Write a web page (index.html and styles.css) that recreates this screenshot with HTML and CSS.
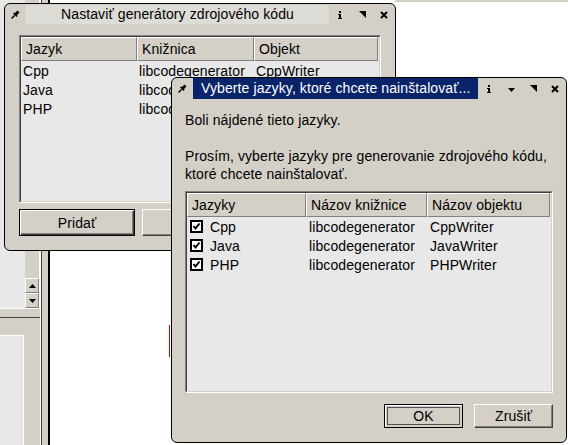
FILE: index.html
```html
<!DOCTYPE html>
<html>
<head>
<meta charset="utf-8">
<link rel="stylesheet" href="styles.css">
</head>
<body>
<div class="desk">
  <div class="topline"></div>
  <div class="bgapp">
    <div class="bg-main">
      <div class="bg-upper">
        <div class="bg-list"></div>
        <div class="bg-scroll">
          <div class="sb-btn"><svg width="7" height="4" viewBox="0 0 7 4"><path d="M0 4 L3.5 0 L7 4 Z" fill="#000"/></svg></div>
          <div class="sb-btn"><svg width="7" height="4" viewBox="0 0 7 4"><path d="M0 0 L7 0 L3.5 4 Z" fill="#000"/></svg></div>
        </div>
      </div>
      <div class="bg-hbar"></div>
      <div class="bg-band"></div>
      <div class="bg-lower"><div class="bg-panel"></div></div>
    </div>
    <div class="bg-edge"></div>
  </div>
  <div class="redmark"></div>

  <div class="win w1">
    <div class="titlebar">
      <div class="pin"><svg width="9" height="9" viewBox="0 0 9 9"><path d="M0.5 8.5 L3.5 5.5" stroke="#000" stroke-width="1.5"/><path d="M2 3.5 L5.5 7 L6.5 6 L6 5 L8.5 2.5 L6.5 0.5 L4 3 L3 2.5 Z" fill="#000"/></svg></div>
      <div class="title">Nastaviť generátory zdrojového kódu</div>
      <div class="tbtns">
        <div class="tbtn"><svg width="4" height="8" viewBox="0 0 4 8"><rect x="1" y="0" width="2" height="2" fill="#000"/><rect x="0" y="3" width="3" height="1" fill="#000"/><rect x="1" y="3" width="2" height="5" fill="#000"/><rect x="0" y="7" width="4" height="1" fill="#000"/></svg></div>
        <div class="tbtn"><svg width="7" height="7" viewBox="0 0 7 7"><path d="M0 0 L7 0 L7 7 Z" fill="#000"/></svg></div>
        <div class="tbtn"><svg width="8" height="8" viewBox="0 0 8 8"><path d="M1 1 L7 7 M7 1 L1 7" stroke="#000" stroke-width="2"/></svg></div>
      </div>
    </div>
    <div class="body1">
      <div class="frame f1">
        <div class="frame-in">
          <div class="lrow lhead">
            <div class="hc">Jazyk</div>
            <div class="hc">Knižnica</div>
            <div class="hc">Objekt</div>
          </div>
          <div class="lrow">
            <div class="c">Cpp</div>
            <div class="c">libcodegenerator</div>
            <div class="c">CppWriter</div>
          </div>
          <div class="lrow">
            <div class="c">Java</div>
            <div class="c">libcodegenerator</div>
            <div class="c">JavaWriter</div>
          </div>
          <div class="lrow">
            <div class="c">PHP</div>
            <div class="c">libcodegenerator</div>
            <div class="c">PHPWriter</div>
          </div>
        </div>
      </div>
      <div class="btnrow1">
        <button class="btn btn1 default">Pridať</button>
        <button class="btn btn1"></button>
        <button class="btn btn1"></button>
      </div>
    </div>
  </div>

  <div class="win w2">
    <div class="titlebar">
      <div class="pin"><svg width="9" height="9" viewBox="0 0 9 9"><path d="M0.5 8.5 L3.5 5.5" stroke="#000" stroke-width="1.5"/><path d="M2 3.5 L5.5 7 L6.5 6 L6 5 L8.5 2.5 L6.5 0.5 L4 3 L3 2.5 Z" fill="#000"/></svg></div>
      <div class="title active">Vyberte jazyky, ktoré chcete nainštalovať...</div>
      <div class="tbtns">
        <div class="tbtn"><svg width="4" height="8" viewBox="0 0 4 8"><rect x="1" y="0" width="2" height="2" fill="#000"/><rect x="0" y="3" width="3" height="1" fill="#000"/><rect x="1" y="3" width="2" height="5" fill="#000"/><rect x="0" y="7" width="4" height="1" fill="#000"/></svg></div>
        <div class="tbtn"><svg class="down" width="7" height="4" viewBox="0 0 7 4"><path d="M0 0 L7 0 L3.5 4 Z" fill="#000"/></svg></div>
        <div class="tbtn"><svg width="7" height="7" viewBox="0 0 7 7"><path d="M0 0 L7 0 L7 7 Z" fill="#000"/></svg></div>
        <div class="tbtn"><svg width="8" height="8" viewBox="0 0 8 8"><path d="M1 1 L7 7 M7 1 L1 7" stroke="#000" stroke-width="2"/></svg></div>
      </div>
    </div>
    <div class="body2">
      <div class="msg">
        <p>Boli nájdené tieto jazyky.</p>
        <p class="gap">Prosím, vyberte jazyky pre generovanie zdrojového kódu,<br>ktoré chcete nainštalovať.</p>
      </div>
      <div class="frame f2">
        <div class="frame-in">
          <div class="lrow lhead">
            <div class="hc">Jazyky</div>
            <div class="hc">Názov knižnice</div>
            <div class="hc">Názov objektu</div>
          </div>
          <div class="lrow">
            <div class="c"><span class="cb"><svg width="13" height="13" viewBox="0 0 13 13"><rect x="1" y="1" width="11" height="11" fill="#fff" stroke="#000" stroke-width="2"/><path d="M3.5 6 L5.5 8.5 L9.5 3.5" fill="none" stroke="#000" stroke-width="2"/></svg></span>Cpp</div>
            <div class="c">libcodegenerator</div>
            <div class="c">CppWriter</div>
          </div>
          <div class="lrow">
            <div class="c"><span class="cb"><svg width="13" height="13" viewBox="0 0 13 13"><rect x="1" y="1" width="11" height="11" fill="#fff" stroke="#000" stroke-width="2"/><path d="M3.5 6 L5.5 8.5 L9.5 3.5" fill="none" stroke="#000" stroke-width="2"/></svg></span>Java</div>
            <div class="c">libcodegenerator</div>
            <div class="c">JavaWriter</div>
          </div>
          <div class="lrow">
            <div class="c"><span class="cb"><svg width="13" height="13" viewBox="0 0 13 13"><rect x="1" y="1" width="11" height="11" fill="#fff" stroke="#000" stroke-width="2"/><path d="M3.5 6 L5.5 8.5 L9.5 3.5" fill="none" stroke="#000" stroke-width="2"/></svg></span>PHP</div>
            <div class="c">libcodegenerator</div>
            <div class="c">PHPWriter</div>
          </div>
        </div>
      </div>
      <div class="btnrow2">
        <button class="btn btn2 default focus">OK</button>
        <button class="btn btn2">Zrušiť</button>
      </div>
    </div>
  </div>
</div>
</body>
</html>
```

FILE: styles.css
```css
html, body {
  margin: 0;
  padding: 0;
}
body {
  font-family: "Liberation Sans", Arial, sans-serif;
  font-size: 14px;
  letter-spacing: 0.1px;
  color: #000;
  background: #fff;
}
.desk {
  position: relative;
  width: 568px;
  height: 445px;
  overflow: hidden;
  background: #fff;
}
.topline {
  position: absolute;
  left: 395px;
  top: 0;
  right: 0;
  height: 2px;
  background: #d4d0c8;
}

/* background application on the left */
.bgapp {
  position: absolute;
  left: 0;
  top: 0;
  width: 50px;
  height: 445px;
  display: flex;
}
.bg-main {
  width: 40px;
  display: flex;
  flex-direction: column;
}
.bg-upper {
  height: 308px;
  display: flex;
}
.bg-list {
  width: 25px;
  background: #e8e8e8;
}
.bg-scroll {
  flex: 1;
  background: #d4d0c8;
  border-right: 1px solid #fff;
  display: flex;
  flex-direction: column;
  justify-content: flex-end;
}
.sb-btn {
  height: 15px;
  box-sizing: border-box;
  border: 1px solid;
  border-color: #fff #808080 #808080 #fff;
  background: #d4d0c8;
  display: flex;
  align-items: center;
  justify-content: center;
}
.bg-hbar {
  height: 10px;
  box-sizing: border-box;
  border-top: 1px solid #fff;
  border-bottom: 1px solid #404040;
  background: #d4d0c8;
}
.bg-band {
  height: 17px;
  background: #d4d0c8;
}
.bg-lower {
  flex: 1;
  background: #d4d0c8;
  display: flex;
}
.bg-panel {
  width: 23px;
  background: #e8e8e8;
  border-top: 1px solid #fff;
  border-right: 1px solid #fff;
}
.bg-edge {
  width: 10px;
  background: linear-gradient(to right, #fff 0 1px, #404040 1px 2px, #d4d0c8 2px 8px, #000 8px 10px);
}
.redmark {
  position: absolute;
  left: 169px;
  top: 325px;
  width: 1px;
  height: 32px;
  background: #e00000;
}

/* windows */
.win {
  position: absolute;
  box-sizing: border-box;
  background: #d4d0c8;
  border: 1px solid #000;
  border-radius: 6px;
  display: flex;
  flex-direction: column;
  overflow: hidden;
}
.w1 {
  left: 4px;
  top: 3px;
  width: 392px;
  height: 248px;
}
.w2 {
  left: 171px;
  top: 77px;
  width: 396px;
  height: 366px;
}
.titlebar {
  flex: none;
  height: 21px;
  display: flex;
  align-items: center;
}
.pin {
  width: 21px;
  height: 21px;
  display: flex;
  align-items: center;
  justify-content: center;
}
.title {
  flex: 1;
  height: 19px;
  line-height: 19px;
  background: #dedcd7;
  text-align: center;
  white-space: nowrap;
  overflow: hidden;
}
.title.active {
  height: 21px;
  line-height: 21px;
  background: #0a246a;
  color: #fff;
  text-align: left;
  padding-left: 8px;
}
.tbtns {
  display: flex;
}
.tbtn {
  width: 22px;
  height: 21px;
  display: flex;
  align-items: center;
  justify-content: center;
}
.tbtn .down {
  margin-top: 2px;
}

/* list frames */
.frame {
  box-sizing: border-box;
  border: 1px solid;
  border-color: #808080 #fff #fff #808080;
}
.frame-in {
  box-sizing: border-box;
  height: 100%;
  border: 1px solid;
  border-color: #404040 #d4d0c8 #d4d0c8 #404040;
  background: #e8e8e8;
}
.lrow {
  display: grid;
  height: 19px;
  align-items: center;
}
.lrow.lhead {
  height: 24px;
  align-items: stretch;
}
.f1 .lrow {
  grid-template-columns: 116px 117px 124px;
}
.f2 .lrow {
  grid-template-columns: 119px 121px 123px;
}
.hc {
  box-sizing: border-box;
  background: #d4d0c8;
  border: 1px solid;
  border-color: #fff #808080 #808080 #fff;
  padding-left: 4px;
  display: flex;
  align-items: center;
  white-space: nowrap;
}
.c {
  padding-left: 2px;
  white-space: nowrap;
  display: flex;
  align-items: center;
}
.f2 .c {
  padding-left: 3px;
}
.cb {
  display: inline-flex;
  width: 13px;
  height: 13px;
  margin-right: 7px;
}

/* window 1 body */
.body1 {
  padding: 10px 14px 14px;
  display: flex;
  flex-direction: column;
}
.f1 {
  height: 168px;
}
.btnrow1 {
  margin-top: 6px;
  display: flex;
  gap: 7px;
}

/* window 2 body */
.body2 {
  padding: 12px 13px 14px;
  display: flex;
  flex-direction: column;
}
.msg p {
  margin: 0;
  line-height: 18px;
}
.msg p.gap {
  margin-top: 18px;
}
.f2 {
  margin-top: 8px;
  height: 202px;
}
.btnrow2 {
  margin-top: 11px;
  display: flex;
  justify-content: flex-end;
  gap: 11px;
}

/* buttons */
.btn {
  font-family: "Liberation Sans", Arial, sans-serif;
  font-size: 14px;
  letter-spacing: 0.1px;
  color: #000;
  background: #d4d0c8;
  box-sizing: border-box;
  border: 1px solid;
  border-color: #fff #404040 #404040 #fff;
  box-shadow: inset -1px -1px 0 #808080;
  padding: 0;
  margin: 0;
}
.btn.default {
  border: 1px solid #000;
  box-shadow: inset 1px 1px 0 #fff, inset -1px -1px 0 #404040, inset -2px -2px 0 #808080;
}
.btn.default.focus {
  box-shadow: inset 1px 1px 0 #fff, inset 0 0 0 2px #d4d0c8, inset 0 0 0 3px #505050;
}
.btn1 {
  width: 116px;
  height: 27px;
}
.btn2 {
  width: 79px;
  height: 24px;
}
```
